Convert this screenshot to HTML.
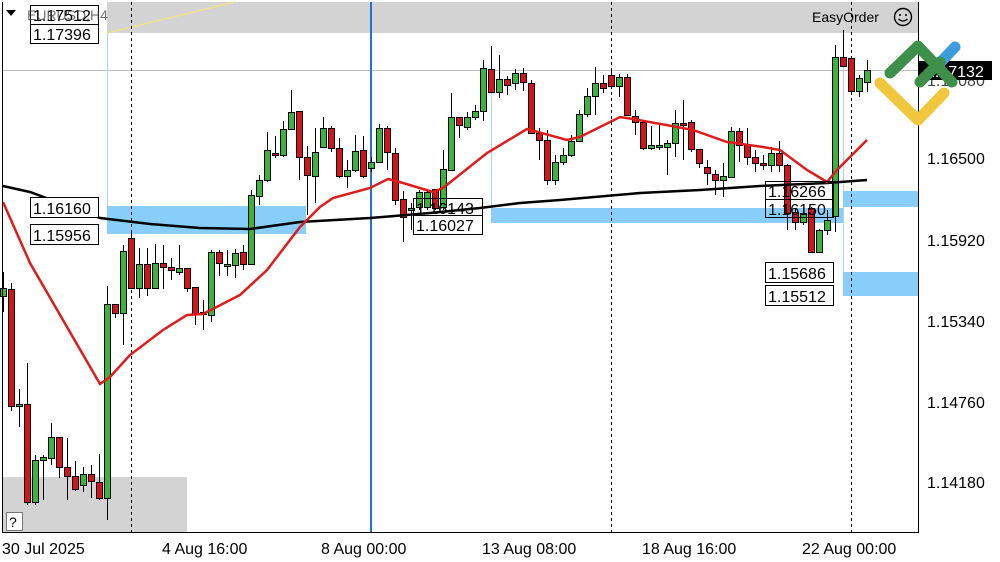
<!DOCTYPE html>
<html><head><meta charset="utf-8"><style>
body{margin:0;width:1000px;height:562px;overflow:hidden;background:#fff;font-family:"Liberation Sans",sans-serif}
svg{display:block}
</style></head><body>
<svg id="s" width="1000" height="562" xmlns="http://www.w3.org/2000/svg" font-family="Liberation Sans, sans-serif">
<rect x="0" y="0" width="1000" height="562" fill="#fff"/>
<rect x="107" y="2" width="811" height="31" fill="#d3d3d3"/>
<rect x="2" y="477" width="185" height="55" fill="#d3d3d3"/>
<line x1="2" y1="70.5" x2="918" y2="70.5" stroke="#c0c0c0"/>
<line x1="107.5" y1="33" x2="107.5" y2="206" stroke="#a8d4f0"/>
<line x1="491.5" y1="60" x2="491.5" y2="208" stroke="#a8d4f0"/>
<line x1="843.5" y1="60" x2="843.5" y2="296" stroke="#a8d4f0"/>
<rect x="107" y="206" width="199" height="28" fill="#87cefa"/>
<rect x="491" y="208" width="352" height="15" fill="#87cefa"/>
<rect x="843" y="191" width="75" height="16" fill="#87cefa"/>
<rect x="843" y="272" width="75" height="24" fill="#87cefa"/>
<line x1="107" y1="33" x2="235" y2="2" stroke="#f0e08a" stroke-width="1.5"/>
<g stroke="#000" stroke-dasharray="3,3"><line x1="131.5" y1="2" x2="131.5" y2="532"/><line x1="611.5" y1="2" x2="611.5" y2="532"/><line x1="851.5" y1="2" x2="851.5" y2="532"/></g>
<line x1="371" y1="2" x2="371" y2="532" stroke="#1e73d2" stroke-width="2"/>
<g id="c"></g>
<polyline fill="none" stroke="#000" stroke-width="2.5" points="3,186 30,192 100,218 150,224 200,228 250,229 300,222 370,218 430,213 480,208 520,203 560,200 640,193 700,190 760,186 827,183 867,180"/>
<polyline fill="none" stroke="#dd1c1c" stroke-width="2.5" points="3,202 30,263 100,384 110,377 130,355 163,330 187,315 203,314 240,295 267,270 300,227 320,207 333,198 370,188 388,179 403,183 433,192 443,188 487,153 527,129 567,140 580,137 620,117 633,119 677,127 693,130 727,142 763,147 780,150 807,170 827,182 837,170 867,140"/>
<g font-size="16" fill="#000">
<g fill="#fff" stroke="#000"><rect x="30.5" y="5.5" width="68" height="19"/><rect x="30.5" y="24.5" width="68" height="19"/>
<rect x="30.5" y="197.5" width="68" height="20"/><rect x="30.5" y="224.5" width="68" height="20"/>
<rect x="413.5" y="198.5" width="69" height="17" fill="none"/><rect x="413.5" y="215.5" width="69" height="19"/>
<rect x="765.5" y="181.5" width="68" height="18" fill="none"/><rect x="765.5" y="199.5" width="68" height="18" fill="none"/>
<rect x="765.5" y="262.5" width="68" height="20"/><rect x="765.5" y="285.5" width="68" height="20"/></g>
<text x="33" y="21">1.17512</text><text x="33" y="40">1.17396</text>
<text x="33" y="214">1.16160</text><text x="33" y="241">1.15956</text>
<text x="416" y="214">1.16143</text><text x="416" y="231">1.16027</text>
<text x="768" y="197">1.16266</text><text x="768" y="215">1.16150</text>
<text x="768" y="279">1.15686</text><text x="768" y="302">1.15512</text>
</g>
<text x="27" y="20" font-size="14" fill="#333" opacity=".7">EURUSD,H4</text>
<path d="M6 10 L16 10 L11 16 Z" fill="#000"/>
<rect x="6.5" y="512.5" width="16" height="18" fill="#fff" stroke="#777"/>
<text x="9" y="527" font-size="14">?</text>
<text x="812" y="22" font-size="14">EasyOrder</text>
<circle cx="903" cy="17" r="8.5" fill="none" stroke="#000" stroke-width="1.4"/>
<circle cx="900" cy="15" r="1" fill="#000"/><circle cx="906" cy="15" r="1" fill="#000"/>
<path d="M898.5 19 Q903 23 907.5 19" fill="none" stroke="#000" stroke-width="1.3"/>
<line x1="918.5" y1="2" x2="918.5" y2="533" stroke="#000"/>
<line x1="2" y1="532.5" x2="919" y2="532.5" stroke="#000"/>
<line x1="2.5" y1="2" x2="2.5" y2="533" stroke="#000"/>
<g font-size="16" fill="#000">
<text x="927" y="164">1.16500</text><text x="927" y="246">1.15920</text><text x="927" y="327">1.15340</text><text x="927" y="408">1.14760</text><text x="927" y="488">1.14180</text>
<text x="927" y="86" fill="#444">1.17080</text>
<rect x="918" y="61" width="74" height="19" fill="#000"/><text x="926" y="77" fill="#fff">1.17132</text>
<text x="2" y="554">30 Jul 2025</text><text x="162" y="554">4 Aug 16:00</text><text x="321" y="554">8 Aug 00:00</text><text x="482" y="554">13 Aug 08:00</text><text x="642" y="554">18 Aug 16:00</text><text x="802" y="554">22 Aug 00:00</text>
</g>
<g fill="none" stroke-linecap="round" stroke-linejoin="round" stroke-width="11">
<polyline points="880,83 918,120 944,93" stroke="#f0c63c"/>
<line x1="939" y1="64" x2="955" y2="47" stroke="#3d9be0"/>
<polyline points="890,73 918,46 952,82" stroke="#3d8f4a"/>
<line x1="920" y1="82" x2="940" y2="62" stroke="#3d8f4a"/>
</g>
</svg>
<script>
var d=[[288,296,272,312],[289,406,283,411,1],[404,406,389,427],[404,502,363,505,1],[460,502,455,505],[457,460,455,500],[437,458,423,465],[437,467,437,478,1],[467,476,438,500,1],[476,489,461,491,1],[474,485,467,492],[474,481,465,498,1],[482,498,454,500,1],[304,498,286,520],[304,313,304,318,1],[251,313,245,345],[238,288,233,288,1],[264,288,248,298],[264,288,248,296,1],[263,288,244,288],[263,267,245,289,1],[267,270,258,280,1],[268,272,245,275],[268,288,268,292,1],[287,314,287,325,1],[312,314,300,330],[252,315,250,322],[252,263,250,276,1],[264,266,250,276],[253,265,249,278],[252,264,245,270,1],[195,264,190,264],[180,196,175,205],[150,180,132,182],[153,155,136,158,1],[129,155,121,157],[112,129,90,130],[111,157,111,180,1],[157,175,146,215,1],[152,176,128,203],[128,147,117,147],[128,148,126,152,1],[148,176,138,178,1],[170,176,160,188],[151,170,135,172],[150,176,136,178,1],[162,168,157,172],[128,162,124,163],[128,152,126,170,1],[153,200,148,205,1],[199,217,191,242,1],[208,210,203,230],[192,207,190,210],[192,207,190,210],[189,208,189,210,1],[169,207,150,210],[117,170,93,170],[117,125,117,138,1],[117,127,112,130],[111,117,105,120],[68,111,60,121],[69,92,46,93,1],[79,92,55,98],[79,85,76,95,1],[73,83,69,90],[73,82,68,91,1],[83,133,80,133,1],[133,140,128,160,1],[140,180,130,185,1],[162,180,155,185],[155,162,148,165],[141,155,135,157],[114,141,110,142],[96,114,88,117],[83,96,67,115],[83,88,75,93,1],[75,86,68,88,1],[77,86,74,97],[77,115,74,115,1],[116,122,110,135,1],[122,148,120,150,1],[145,148,126,150],[145,147,125,150],[143,147,140,175],[123,143,110,157],[123,125,100,160,1],[122,149,120,152,1],[149,163,149,168,1],[167,173,160,185,1],[174,180,170,195,1],[176,180,163,197],[131,177,127,178],[131,145,128,162,1],[145,157,128,165,1],[157,163,150,172,1],[163,165,155,170,1],[153,165,147,172],[153,165,141,172,1],[165,213,164,230,1],[212,222,208,230,1],[213,222,208,225],[208,252,207,252,1],[230,252,229,253],[220,230,210,235],[57,216,45,232],[57,66,30,67,1],[58,91,58,93,1],[78,91,75,97],[70,82,60,92]];
var h='';for(var i=0;i<d.length;i++){var x=3+8*i,c=d[i];var f=c[4]?'#d0161b':'#3cb43c';h+='<line x1="'+(x+0.5)+'" y1="'+c[2]+'" x2="'+(x+0.5)+'" y2="'+c[3]+'" stroke="#000"/>';var hh=Math.max(c[1]-c[0],1);h+='<rect x="'+(x-2.5)+'" y="'+(c[0]+0.5)+'" width="6" height="'+hh+'" fill="'+f+'" stroke="#000" stroke-width="1"/>';}
document.getElementById('c').innerHTML=h;
</script>
</body></html>
